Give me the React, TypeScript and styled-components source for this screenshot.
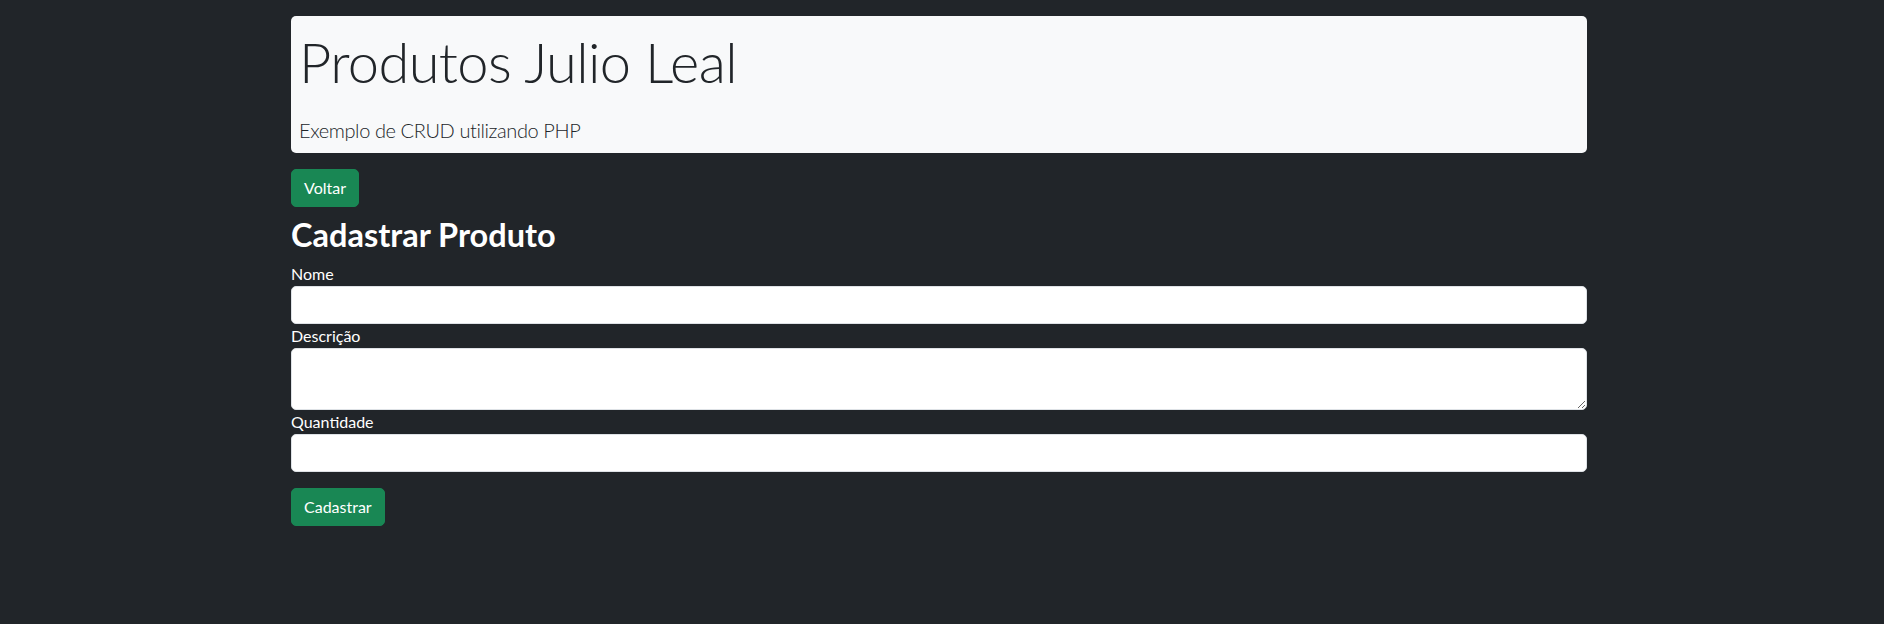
import React from "react";
import styled, { createGlobalStyle } from "styled-components";

const Global = createGlobalStyle`
  html, body { margin: 0; padding: 0; background: #212529; }
  body {
    font-family: "Lato", "Open Sans", sans-serif;
    color: #ffffff;
    font-size: 16px;
    line-height: 1.5;
  }
  * { box-sizing: border-box; }
`;

const Container = styled.div`
  width: 1296px;
  margin: 0 0 0 291px;
  padding-top: 16px;
  display: flex;
  flex-direction: column;
  align-items: flex-start;
`;

const Jumbotron = styled.header`
  width: 100%;
  background: #f8f9fa;
  border-radius: 5px;
  padding: 8px 8px 8px;
  margin-bottom: 16px;
`;

const Title = styled.h1`
  margin: 4px 0 20px;
  font-family: "Lato", sans-serif;
  font-weight: 300;
  font-size: 56px;
  line-height: 67px;
  letter-spacing: -0.6px;
  color: #212529;
`;

const Lead = styled.p`
  margin: 0;
  font-family: "Lato", sans-serif;
  font-weight: 300;
  font-size: 20px;
  line-height: 30px;
  letter-spacing: -0.4px;
  color: #212529;
`;

const Button = styled.button<{ $mt?: number }>`
  font-family: "Lato", sans-serif;
  font-size: 16px;
  line-height: 24px;
  padding: 6px 12px;
  color: #fff;
  background: #198754;
  border: 1px solid #198754;
  border-radius: 5px;
  cursor: pointer;
  margin-top: ${(p) => p.$mt ?? 0}px;
`;

const Heading = styled.h2`
  margin: 9px 0 8px;
  font-family: "Lato", sans-serif;
  font-weight: 700;
  font-size: 32.5px;
  line-height: 38px;
  color: #fff;
`;

const Form = styled.form`
  width: 100%;
  display: flex;
  flex-direction: column;
  align-items: flex-start;
`;

const Label = styled.label`
  font-family: "Lato", sans-serif;
  font-size: 16px;
  line-height: 24px;
  color: #fff;
`;

const Input = styled.input`
  width: 100%;
  height: 38px;
  background: #fff;
  border: 1px solid #dee2e6;
  border-radius: 5px;
  padding: 6px 12px;
  font-size: 16px;
`;

const TextArea = styled.textarea`
  width: 100%;
  height: 62px;
  background: #fff;
  border: 1px solid #dee2e6;
  border-radius: 5px;
  padding: 6px 12px;
  font-size: 16px;
  display: block;
`;

export default function App() {
  return (
    <>
      <Global />
      <Container>
        <Jumbotron>
          <Title>Produtos Julio Leal</Title>
          <Lead>Exemplo de CRUD utilizando PHP</Lead>
        </Jumbotron>
        <Button type="button">Voltar</Button>
        <Heading>Cadastrar Produto</Heading>
        <Form onSubmit={(e) => e.preventDefault()}>
          <Label htmlFor="nome">Nome</Label>
          <Input id="nome" type="text" />
          <Label htmlFor="descricao">Descrição</Label>
          <TextArea id="descricao" />
          <Label htmlFor="quantidade">Quantidade</Label>
          <Input id="quantidade" type="number" />
          <Button type="submit" $mt={16}>Cadastrar</Button>
        </Form>
      </Container>
    </>
  );
}
